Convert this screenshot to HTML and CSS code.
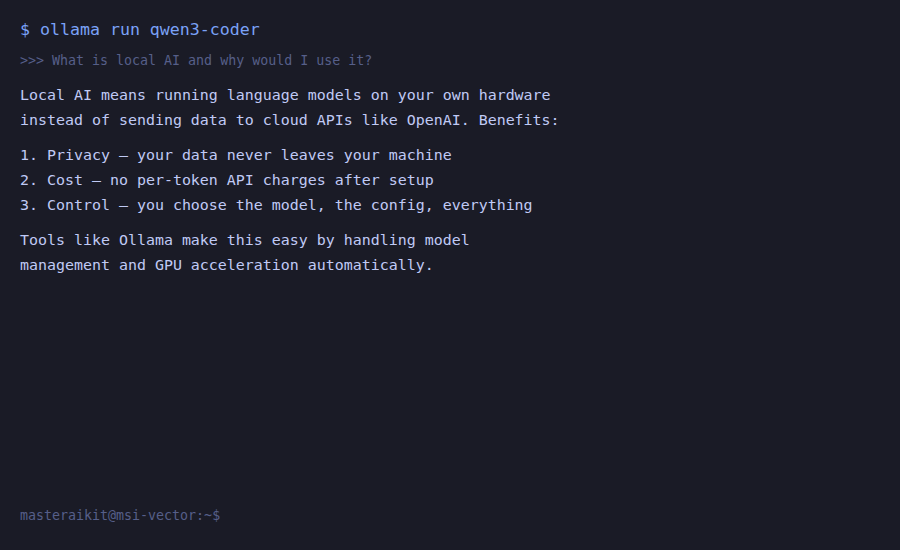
FILE: index.html
```html
<!DOCTYPE html>
<html lang="en">
<head>
<meta charset="utf-8">
<title>Terminal</title>
<link rel="stylesheet" href="styles.css">
</head>
<body>
<main class="terminal">
  <div class="command">$ ollama run qwen3-coder</div>
  <div class="prompt">&gt;&gt;&gt; What is local AI and why would I use it?</div>
  <div class="output">
    <p class="para">Local AI means running language models on your own hardware<br>instead of sending data to cloud APIs like OpenAI. Benefits:</p>
    <ol class="list">
      <li>1. Privacy — your data never leaves your machine</li>
      <li>2. Cost — no per-token API charges after setup</li>
      <li>3. Control — you choose the model, the config, everything</li>
    </ol>
    <p class="para">Tools like Ollama make this easy by handling model<br>management and GPU acceleration automatically.</p>
  </div>
  <div class="shell">masteraikit@msi-vector:~$</div>
</main>
</body>
</html>
```
FILE: styles.css
```css
html, body {
  margin: 0;
  padding: 0;
  background: #1a1b26;
}

body {
  font-family: "DejaVu Sans Mono", "Liberation Mono", monospace;
}

.terminal {
  height: 100vh;
  box-sizing: border-box;
  display: flex;
  flex-direction: column;
  padding: 17px 20px 24px;
}

.command {
  font-size: 16.6px;
  line-height: 25px;
  color: #7aa2f7;
}

.prompt {
  margin-top: 9px;
  font-size: 13.3px;
  line-height: 20px;
  color: #565f89;
}

.output {
  margin-top: 12px;
  font-size: 14.95px;
  line-height: 25px;
  color: #c0caf5;
}

.para {
  margin: 0;
}

.list {
  list-style: none;
  margin: 10px 0;
  padding: 0;
}

.shell {
  margin-top: auto;
  font-size: 13.3px;
  line-height: 20px;
  color: #565f89;
}
```
